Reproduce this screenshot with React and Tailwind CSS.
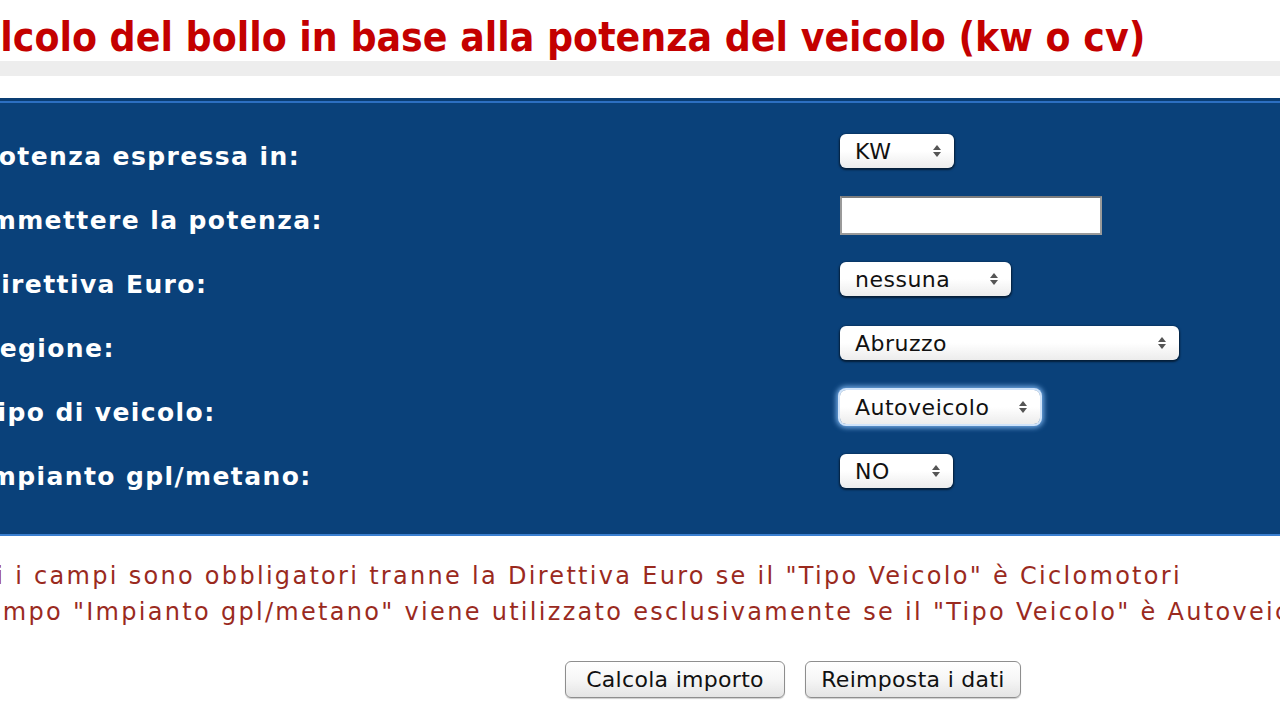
import React from 'react';

const Arrows = () => (
    <svg width="10" height="16" viewBox="0 0 10 16" className="shrink-0">
        <path d="M5 2 L9 7 L1 7 Z" fill="#555" />
        <path d="M5 14 L9 9 L1 9 Z" fill="#555" />
    </svg>
);

const Select = ({ value, width, focused }) => (
    <div
        className={`flex items-center justify-between h-[34px] pl-[15px] pr-[12px] rounded-[6px] bg-gradient-to-b from-white via-white to-[#ececec] text-[22px] tracking-[0.5px] text-[#111] ${focused ? 'shadow-[0_0_0_2px_#cfe3fa,0_0_5px_4px_#6fa6e0]' : 'shadow-[0_1px_2px_1px_rgba(0,0,0,0.55)]'}`}
        style={{ width, fontFamily: '"DejaVu Sans", Verdana, sans-serif' }}
    >
        <span>{value}</span>
        <Arrows />
    </div>
);

const rows = [
    { label: 'Potenza espressa in:', control: <Select value="KW" width={114} /> },
    { label: 'Immettere la potenza:', control: <div className="w-[262px] h-[39px] bg-white border-2 border-[#9a9a9a] border-t-[#7d7d7d]" /> },
    { label: 'Direttiva Euro:', control: <Select value="nessuna" width={171} /> },
    { label: 'Regione:', control: <Select value="Abruzzo" width={339} /> },
    { label: 'Tipo di veicolo:', control: <Select value="Autoveicolo" width={200} focused /> },
    { label: 'Impianto gpl/metano:', control: <Select value="NO" width={113} /> },
];

const Button = ({ children, width }) => (
    <button
        className="h-[37px] rounded-[6px] border border-[#8e8e8e] bg-gradient-to-b from-white via-[#f6f6f6] to-[#e4e4e4] text-[22px] tracking-[0.3px] text-[#111] shadow-[0_1px_1px_rgba(0,0,0,0.2)]"
        style={{ width, fontFamily: '"DejaVu Sans", Verdana, sans-serif' }}
    >
        {children}
    </button>
);

export default function App() {
    return (
        <div className="w-[1280px] h-[720px] overflow-hidden bg-white">
            <div className="-ml-[60px] w-[1400px]" style={{ fontFamily: '"DejaVu Sans", Verdana, sans-serif' }}>
                <h1
                    className="pl-[9px] pt-[13px] h-[61px] text-[40.5px] leading-[48px] font-bold text-[#c40000] whitespace-nowrap"
                    style={{ fontFamily: '"DejaVu Sans Condensed", "DejaVu Sans", sans-serif' }}
                >
                    Calcolo del bollo in base alla potenza del veicolo (kw o cv)
                </h1>
                <div className="h-[15px] bg-[#ededed]" />
                <div className="h-[22px]" />

                <div className="bg-[#0a417a] border-t-[3px] border-t-[#0a3d73] border-b-[2px] border-b-[#3a7fd0]">
                    <div className="h-[2px] bg-[#2c6fc2]" />
                    <div className="pt-[16px] pb-[31px]">
                        {rows.map((r) => (
                            <div key={r.label} className="flex items-center h-[64px]">
                                <div className="w-[900px] pl-[39px] pt-[12px] text-[25px] tracking-[1.4px] font-bold text-white whitespace-nowrap">
                                    {r.label}
                                </div>
                                {r.control}
                            </div>
                        ))}
                    </div>
                </div>

                <div className="pt-[22px] pl-[2px] text-[24px] leading-[36px] tracking-[2.3px] text-[#9a2a1e] whitespace-nowrap">
                    <p>Tutti i campi sono obbligatori tranne la Direttiva Euro se il "Tipo Veicolo" è Ciclomotori</p>
                    <p>Il campo "Impianto gpl/metano" viene utilizzato esclusivamente se il "Tipo Veicolo" è Autoveicolo</p>
                </div>

                <div className="flex gap-[20px] pl-[625px] pt-[31px]">
                    <Button width={220}>Calcola importo</Button>
                    <Button width={216}>Reimposta i dati</Button>
                </div>
            </div>
        </div>
    );
}
